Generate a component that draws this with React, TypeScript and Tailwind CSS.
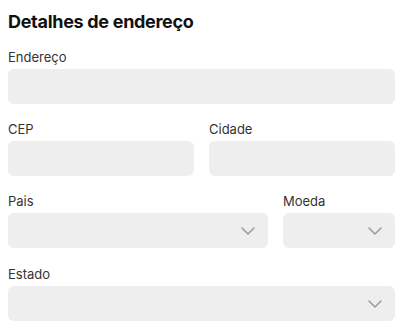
const Chevron = () => (
  <svg width="14" height="8" viewBox="0 0 14 8" fill="none" className="absolute right-[13px] top-1/2 -translate-y-1/2">
    <path d="M1 1l6 6 6-6" stroke="#9a9a9a" strokeWidth="1.5" strokeLinecap="round" strokeLinejoin="round" />
  </svg>
);

const Field = ({ label, select, className = "" }: { label: string; select?: boolean; className?: string }) => (
  <div className={"flex flex-col " + className}>
    <label className="text-[13px] leading-[18px] text-[#333] mb-[3px]">{label}</label>
    <div className="relative h-[35px] rounded-md bg-[#eeeeee]">{select && <Chevron />}</div>
  </div>
);

const App = () => {
  return (
    <div className="w-[400px] h-[331px] bg-white pl-2 pr-[5px] pt-[10px] font-['Inter',sans-serif] overflow-hidden">
      <h2 className="text-[18px] leading-6 font-bold text-[#111] tracking-[-0.3px]">Detalhes de endereço</h2>

      <Field label="Endereço" className="mt-[14px]" />

      <div className="grid grid-cols-2 gap-x-[15px] mt-4">
        <Field label="CEP" />
        <Field label="Cidade" />
      </div>

      <div className="grid grid-cols-[260px_1fr] gap-x-[15px] mt-4">
        <Field label="Pais" select />
        <Field label="Moeda" select />
      </div>

      <Field label="Estado" select className="mt-[17px]" />
    </div>
  );
};

export default App;
